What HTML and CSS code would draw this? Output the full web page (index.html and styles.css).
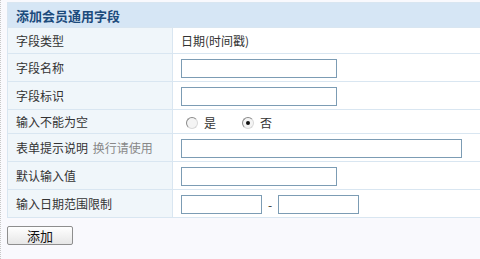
FILE: index.html
```html
<!DOCTYPE html>
<html lang="zh-CN">
<head>
<meta charset="UTF-8">
<title>添加会员通用字段</title>
<link rel="stylesheet" href="styles.css">
</head>
<body>

<div class="page">
    <table class="form-table">
        <tr>
            <th colspan="2" class="title">添加会员通用字段</th>
        </tr>
        <tr>
            <td class="label">字段类型</td>
            <td class="value">日期(时间戳)</td>
        </tr>
        <tr>
            <td class="label">字段名称</td>
            <td class="value"><input type="text" class="text"></td>
        </tr>
        <tr>
            <td class="label">字段标识</td>
            <td class="value"><input type="text" class="text"></td>
        </tr>
        <tr class="short">
            <td class="label">输入不能为空</td>
            <td class="value">
                <label class="radio"><span class="dot"></span>是</label><label class="radio"><span class="dot checked"></span>否</label>
            </td>
        </tr>
        <tr>
            <td class="label">表单提示说明 <span class="hint">换行请使用</span></td>
            <td class="value"><input type="text" class="text long"></td>
        </tr>
        <tr>
            <td class="label">默认输入值</td>
            <td class="value"><input type="text" class="text"></td>
        </tr>
        <tr>
            <td class="label">输入日期范围限制</td>
            <td class="value"><input type="text" class="text date"><span class="dash">-</span><input type="text" class="text date"></td>
        </tr>
    </table>

    <div class="actions">
        <button class="button">添加</button>
    </div>
</div>

</body>
</html>
```

FILE: styles.css
```css
html, body {
    margin: 0;
    padding: 0;
}
body {
    font-family: "Noto Sans CJK SC", "Liberation Sans", sans-serif;
    font-size: 12px;
    color: #333;
    background-color: #f9f9fd;
    border-left: 1px dotted #c8c8c8;
    overflow: hidden;
    height: 259px;
    box-sizing: border-box;
}
.page {
    padding: 2px 0 0 6px;
}
.form-table {
    width: 490px;
    border-collapse: collapse;
    border: 1px solid #d9e6f1;
    background-color: #fff;
}
.form-table td, .form-table th {
    border-top: 1px solid #d9e6f1;
    padding: 0;
}
.title {
    height: 24px;
    background-color: #d6e6f5;
    color: #1c4b7c;
    font-size: 13px;
    font-weight: bold;
    text-align: left;
    padding-left: 8px !important;
}
.label {
    width: 156px;
    height: 27px;
    padding-left: 8px !important;
    background-color: #f0f6fa;
    border-right: 1px solid #d9e6f1;
}
.form-table tr:nth-child(2) td {
    height: 25px;
}
.short td {
    height: 23px;
}
.value {
    padding-left: 8px !important;
}
.hint {
    color: #888;
    margin-left: 2px;
}
.text {
    width: 150px;
    height: 17px;
    border: 1px solid #7c9cb4;
    padding: 0 2px;
    margin: 0;
    box-sizing: content-box;
    vertical-align: middle;
    background: #fff;
}
.text.long {
    width: 275px;
}
.text.date {
    width: 75px;
}
.dash {
    display: inline-block;
    width: 16px;
    text-align: center;
    vertical-align: middle;
}
.radio {
    display: inline-flex;
    align-items: center;
    margin-left: 5px;
    margin-right: 21px;
    vertical-align: middle;
}
.dot {
    display: inline-block;
    width: 10px;
    height: 10px;
    border-radius: 50%;
    border: 1px solid #8a8a8a;
    border-right-color: #d8d8d8;
    border-bottom-color: #d8d8d8;
    background: #f4f4f4;
    margin-right: 6px;
    position: relative;
}
.dot.checked::after {
    content: "";
    position: absolute;
    left: 3px;
    top: 3px;
    width: 4px;
    height: 4px;
    border-radius: 50%;
    background: #111;
}
.actions {
    display: flex;
    padding-top: 8px;
}
.button {
    width: 66px;
    height: 19px;
    padding: 0;
    font-family: "Noto Sans CJK SC", sans-serif;
    font-size: 13px;
    line-height: 17px;
    color: #111;
    border: 1px solid #8e8e8e;
    border-radius: 2px;
    background: linear-gradient(#ffffff, #e6e6e6);
}
```
